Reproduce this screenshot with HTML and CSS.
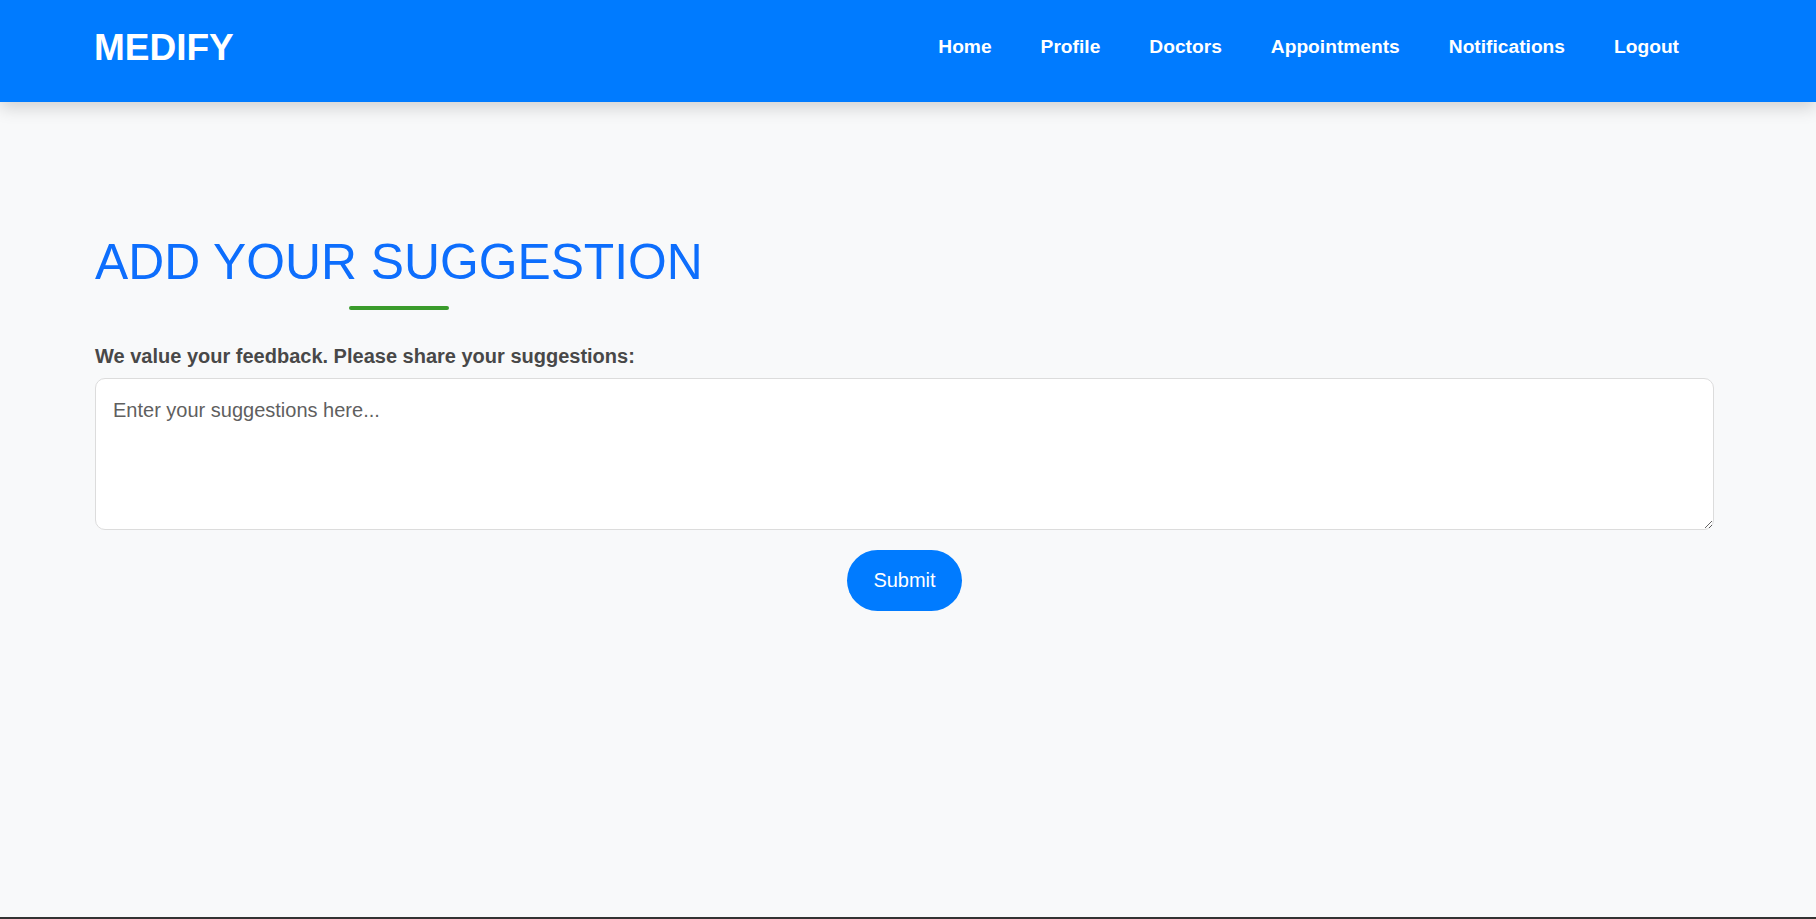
FILE: index.html
```html
<!DOCTYPE html>
<html lang="en">
<head>
<meta charset="utf-8">
<title>Medify - Add Your Suggestion</title>
<link rel="stylesheet" href="styles.css">
</head>
<body>
<header class="site-header">
  <div class="logo">MEDIFY</div>
  <nav class="main-nav">
    <a href="#">Home</a>
    <a href="#">Profile</a>
    <a href="#">Doctors</a>
    <a href="#">Appointments</a>
    <a href="#">Notifications</a>
    <a href="#">Logout</a>
  </nav>
</header>
<main class="content">
  <div class="title-wrap">
    <h1 class="page-title">ADD YOUR SUGGESTION</h1>
    <div class="title-bar"></div>
  </div>
  <form class="suggest-form">
    <label class="form-label" for="suggestion">We value your feedback. Please share your suggestions:</label>
    <textarea id="suggestion" class="suggest-input" placeholder="Enter your suggestions here..."></textarea>
    <div class="actions">
      <button type="button" class="submit-btn">Submit</button>
    </div>
  </form>
</main>
<footer class="site-footer"></footer>
</body>
</html>
```
FILE: styles.css
```css
* { box-sizing: border-box; }
html, body { margin: 0; padding: 0; }
body {
  background: #f8f9fa;
  font-family: "Liberation Sans", Arial, sans-serif;
  color: #333;
}
.site-header {
  height: 102px;
  background: #007bff;
  display: flex;
  align-items: center;
  justify-content: space-between;
  padding: 0 137px 8px 94px;
  box-shadow: 0 6px 16px rgba(0, 0, 0, 0.16);
  position: relative;
  z-index: 2;
}
.logo {
  color: #fff;
  font-weight: bold;
  font-size: 37px;
  line-height: 41px;
}
.main-nav {
  display: flex;
  gap: 49px;
}
.main-nav a {
  color: #fff;
  text-decoration: none;
  font-weight: bold;
  font-size: 19.2px;
  line-height: 22px;
}
.content {
  min-height: 815px;
  padding: 132px 102px 40px 95px;
}
.title-wrap {
  display: inline-flex;
  flex-direction: column;
  align-items: center;
}
.page-title {
  margin: 0;
  font-size: 49.8px;
  font-weight: normal;
  line-height: 57.5px;
  color: #0d6efd;
}
.title-bar {
  width: 100px;
  height: 4px;
  margin-top: 14px;
  border-radius: 2px;
  background: #3a9b2b;
}
.suggest-form {
  margin-top: 35px;
  display: flex;
  flex-direction: column;
}
.form-label {
  font-size: 20px;
  font-weight: bold;
  line-height: 23px;
  color: #484848;
  margin-bottom: 10px;
}
.suggest-input {
  width: 1619px;
  height: 152px;
  border: 1px solid #dcdcdc;
  border-radius: 10px;
  background: #fff;
  padding: 20px 17px 16px;
  font-family: "Liberation Sans", Arial, sans-serif;
  font-size: 20px;
  line-height: 23px;
  color: #333;
  resize: vertical;
}
.suggest-input::placeholder { color: #5f5f5f; }
.actions {
  width: 1619px;
  display: flex;
  justify-content: center;
  margin-top: 20px;
}
.submit-btn {
  background: #007bff;
  color: #fff;
  border: none;
  border-radius: 31px;
  padding: 19px 26px;
  font-family: "Liberation Sans", Arial, sans-serif;
  font-size: 20px;
  line-height: 23px;
  cursor: pointer;
}
.site-footer {
  background: #333;
  height: 40px;
}
```
